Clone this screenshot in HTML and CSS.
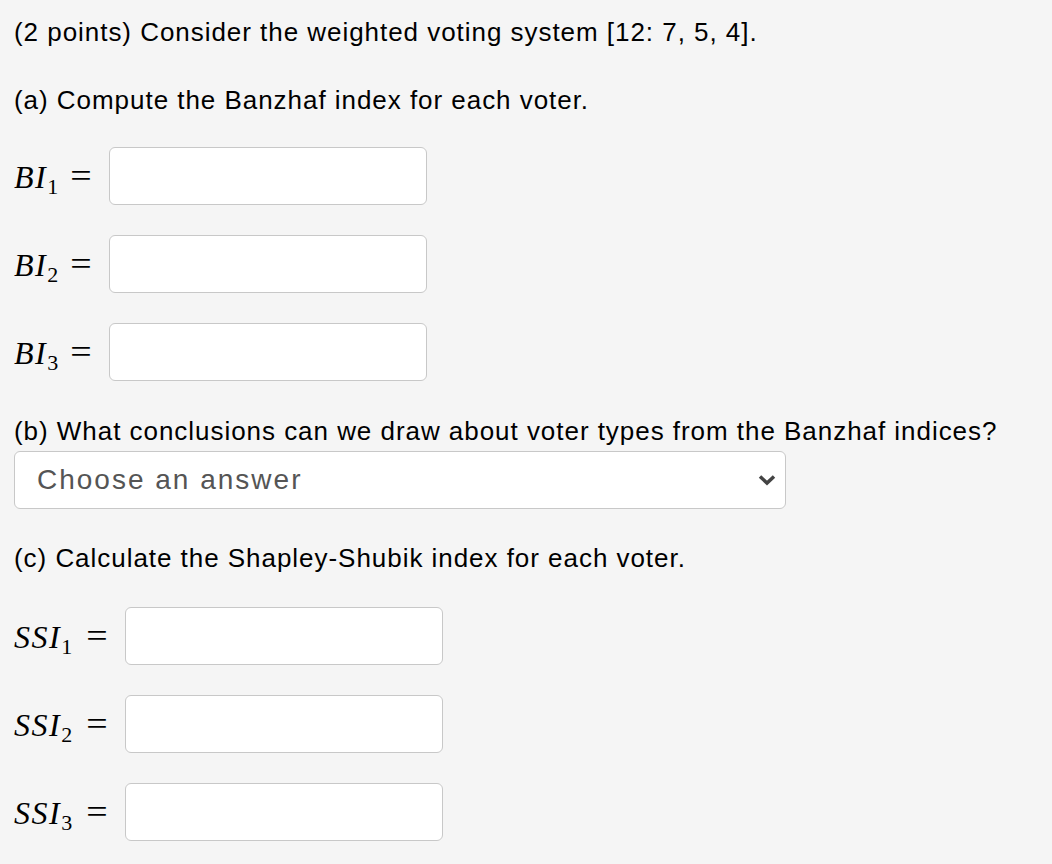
FILE: index.html
```html
<!DOCTYPE html>
<html>
<head>
<meta charset="utf-8">
<link rel="stylesheet" href="styles.css">
</head>
<body>
<div class="page">
  <p class="title">(2 points) Consider the weighted voting system [12: 7, 5, 4].</p>
  <p class="q qa">(a) Compute the Banzhaf index for each voter.</p>
  <div class="rows">
    <div class="row"><span class="math bi"><i>BI</i><sub>1</sub></span><span class="eq">=</span><input class="box" type="text"></div>
    <div class="row"><span class="math bi"><i>BI</i><sub>2</sub></span><span class="eq">=</span><input class="box" type="text"></div>
    <div class="row"><span class="math bi"><i>BI</i><sub>3</sub></span><span class="eq">=</span><input class="box" type="text"></div>
  </div>
  <p class="q qb">(b) What conclusions can we draw about voter types from the Banzhaf indices?</p>
  <div class="select">
    <span class="placeholder">Choose an answer</span>
    <svg class="chev" width="18" height="12" viewBox="0 0 18 12"><path d="M2 2.5 L9 9 L16 2.5" fill="none" stroke="#444" stroke-width="3.5"/></svg>
  </div>
  <p class="q qc">(c) Calculate the Shapley-Shubik index for each voter.</p>
  <div class="rows">
    <div class="row"><span class="math ssi"><i>SSI</i><sub>1</sub></span><span class="eq">=</span><input class="box" type="text"></div>
    <div class="row"><span class="math ssi"><i>SSI</i><sub>2</sub></span><span class="eq">=</span><input class="box" type="text"></div>
    <div class="row"><span class="math ssi"><i>SSI</i><sub>3</sub></span><span class="eq">=</span><input class="box" type="text"></div>
  </div>
</div>
</body>
</html>
```
FILE: styles.css
```css
html, body {
  margin: 0;
  padding: 0;
  background: #f5f5f5;
}
.page {
  padding: 17px 0 0 14px;
  font-family: "Liberation Sans", Arial, sans-serif;
  font-size: 26px;
  letter-spacing: 0.96px;
  color: #000;
}
p {
  margin: 0;
  line-height: 30px;
  white-space: nowrap;
}
.qa { margin-top: 38px; }
.rows {
  display: flex;
  flex-direction: column;
  gap: 30px;
  margin-top: 32px;
}
.row {
  display: flex;
  align-items: center;
  height: 58px;
}
.math {
  font-family: "Liberation Serif", "Times New Roman", serif;
  font-size: 32px;
  letter-spacing: 1.5px;
  display: inline-flex;
  align-items: baseline;
  margin-top: 2px;
}
.math i { font-style: italic; }
.math sub {
  font-size: 22px;
  letter-spacing: 0;
  vertical-align: baseline;
  position: relative;
  top: 6px;
  margin-left: 0;
}
.bi { width: 56px; }
.ssi { width: 72px; }
.eq {
  font-family: "Liberation Serif", "Times New Roman", serif;
  font-size: 33px;
  letter-spacing: 0;
  display: inline-block;
  transform: scaleX(1.15);
  margin: 0 17px 0 0;
  width: 22px;
  text-align: center;
}
.box {
  width: 318px;
  height: 58px;
  box-sizing: border-box;
  border: 1px solid #c8c8c8;
  border-radius: 6px;
  background: #fff;
  margin: 0;
  padding: 0;
}
.qb { margin-top: 35px; }
.select {
  margin-top: 5px;
  width: 772px;
  height: 58px;
  box-sizing: border-box;
  border: 1px solid #c8c8c8;
  border-radius: 6px;
  background: #fff;
  display: flex;
  align-items: center;
  justify-content: space-between;
  padding: 0 9px 0 22px;
  letter-spacing: 0;
}
.placeholder {
  color: #555;
  font-size: 28px;
  letter-spacing: 2px;
}
.qc { margin-top: 34px; }
.qc + .rows { margin-top: 34px; }
```
